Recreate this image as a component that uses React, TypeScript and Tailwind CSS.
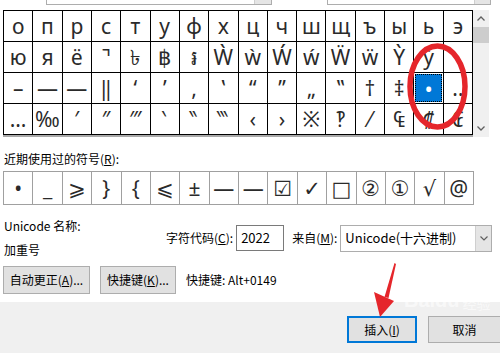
import React from "react";

const row1 = ["о","п","р","с","т","у","ф","х","ц","ч","ш","щ","ъ","ы","ь","э"];
const row2 = ["ю","я","ё","⌝","৳","฿","៛","Ẁ","ẁ","Ẃ","ẃ","Ẅ","ẅ","Ỳ","ỳ",""];
const row3 = ["–","—","―","‖","‘","’","‚","‛","“","”","„","‟","†","‡","•","‥"];
const row4 = ["…","‰","′","″","‴","‵","‶","‷","‹","›","※","‽","⁄","₠","₡","₢"];
const recent = ["•","_","⩾","}","{","⩽","±","—","—","☑","✓","□","②","①","√","@"];

function Cell({ ch, selected }: { ch: string; selected?: boolean }) {
  if (selected) {
    return (
      <div className="h-[31px] border-r border-b border-black bg-white p-[1px]">
        <div className="h-full w-full bg-[#0078d7] outline-1 outline-dotted outline-black -outline-offset-1 flex items-center justify-center text-white text-[22px] leading-none">
          {ch}
        </div>
      </div>
    );
  }
  return (
    <div className="h-[31px] border-r border-b border-black flex items-center justify-center text-[21px] leading-none text-[#2a2a2a]">
      {ch}
    </div>
  );
}

export default function App() {
  const rows = [row1, row2, row3, row4];
  return (
    <div className="relative w-[500px] h-[353px] overflow-hidden bg-white font-['Noto_Sans_CJK_SC',sans-serif] text-[12px] text-black">
      {/* White tab page */}
      <div className="h-[302px] bg-white flex flex-col">
        {/* top cut-off combo boxes */}
        <div className="h-[5px] flex">
          <div className="ml-[46px] w-[226px] border-x border-b border-[#adadad] flex justify-end">
            <div className="w-[17px] bg-[#e5e5e5] border-l border-[#cfcfcf]" />
          </div>
          <div className="ml-[55px] w-[164px] border-x border-b border-[#adadad] flex justify-end">
            <div className="w-[16px] bg-[#e5e5e5] border-l border-[#cfcfcf]" />
          </div>
        </div>

        {/* symbol grid + scrollbar */}
        <div className="mt-[5px] flex">
          <div className="ml-[3px] w-[470px] flex flex-col">
            <div className="grid grid-cols-[repeat(16,1fr)] border-l border-t border-black font-['Noto_Sans','DejaVu_Sans',sans-serif]">
              {rows.map((r, ri) =>
                r.map((ch, ci) => (
                  <Cell key={`${ri}-${ci}`} ch={ch} selected={ri === 2 && ci === 14} />
                ))
              )}
            </div>
            <div className="h-[2px] bg-[#a9a9a9]" />
          </div>
          <div className="w-[16px] h-[127px] bg-[#f0f0f0] flex flex-col items-center">
            <svg width="16" height="16" viewBox="0 0 16 16" className="mt-[1px]">
              <path d="M4.5 9.5 L8 6 L11.5 9.5" fill="none" stroke="#606060" strokeWidth="1.3" />
            </svg>
            <div className="w-[16px] h-[16px] bg-[#cdcdcd]" />
            <div className="flex-1" />
            <svg width="16" height="16" viewBox="0 0 16 16" className="mb-[1px]">
              <path d="M4.5 6.5 L8 10 L11.5 6.5" fill="none" stroke="#606060" strokeWidth="1.3" />
            </svg>
          </div>
        </div>

        {/* recent label */}
        <div className="mt-[14px] ml-[4px] leading-[16px]">
          近期使用过的符号(<span className="underline">R</span>):
        </div>

        {/* recent symbols */}
        <div className="mt-[4px] ml-[3px] w-[471px] grid grid-cols-[repeat(16,1fr)] border-l border-t border-[#a0a0a0] font-['Noto_Sans','DejaVu_Sans',sans-serif]">
          {recent.map((ch, i) => (
            <div
              key={i}
              className="h-[33px] border-r border-b border-[#a0a0a0] flex items-center justify-center text-[21px] leading-none text-[#2a2a2a]"
            >
              {ch}
            </div>
          ))}
        </div>

        {/* unicode name + code row */}
        <div className="mt-[9px] flex items-center">
          <div className="ml-[4px] w-[162px] flex flex-col leading-[24px]">
            <div>Unicode 名称:</div>
            <div>加重号</div>
          </div>
          <div className="whitespace-nowrap">
            字符代码(<span className="underline">C</span>):
          </div>
          <div className="ml-[3px] w-[48px] h-[26px] border border-[#7a7a7a] bg-white flex items-center pl-[4px] text-[13px]">
            2022
          </div>
          <div className="ml-[8px] whitespace-nowrap">
            来自(<span className="underline">M</span>):
          </div>
          <div className="ml-[3px] w-[152px] h-[27px] border border-[#adadad] bg-white flex items-center">
            <div className="flex-1 pl-[4px] text-[13px]">Unicode(十六进制)</div>
            <div className="w-[16px] h-full bg-[#e5e5e5] border-l border-[#cfcfcf] flex items-center justify-center">
              <svg width="10" height="10" viewBox="0 0 10 10">
                <path d="M1.5 3.5 L5 7 L8.5 3.5" fill="none" stroke="#606060" strokeWidth="1.2" />
              </svg>
            </div>
          </div>
        </div>

        {/* buttons row */}
        <div className="mt-[4px] ml-[3px] flex items-center">
          <div className="w-[87px] h-[28px] bg-[#e1e1e1] border border-[#adadad] flex items-center justify-center">
            自动更正(<span className="underline">A</span>)...
          </div>
          <div className="ml-[10px] w-[76px] h-[28px] bg-[#e1e1e1] border border-[#adadad] flex items-center justify-center">
            快捷键(<span className="underline">K</span>)...
          </div>
          <div className="ml-[10px]">快捷键: Alt+0149</div>
        </div>
      </div>

      {/* footer */}
      <div className="h-[51px] bg-[#f0f0f0] flex justify-end items-start pt-[14px]">
        <div className="w-[70px] h-[27px] bg-[#e1e1e1] border-2 border-[#0078d7] flex items-center justify-center">
          插入(<span className="underline">I</span>)
        </div>
        <div className="ml-[11px] mr-[-1px] w-[73px] h-[27px] bg-[#e1e1e1] border border-[#adadad] flex items-center justify-center">
          取消
        </div>
      </div>

      {/* faint watermark */}
      <div className="absolute left-[404px] top-[290px] flex items-end gap-[3px] text-white/60 pointer-events-none leading-none">
        <span className="text-[20px] font-bold font-['Liberation_Sans',sans-serif]">Baidu</span>
        <span className="text-[14px] font-['Noto_Sans_CJK_SC',sans-serif]">经验</span>
      </div>

      {/* red annotations */}
      <svg className="absolute left-0 top-0 pointer-events-none" width="500" height="353" viewBox="0 0 500 353">
        <ellipse cx="437.5" cy="86.5" rx="27.5" ry="40.5" fill="none" stroke="#e5262b" strokeWidth="5.5" />
        <path d="M394.5 263 L396 264 L388.5 298 L384.5 297 Z" fill="#e5262b" />
        <path d="M374 292 L394 301 L380 317 Z" fill="#e5262b" />
      </svg>
    </div>
  );
}
